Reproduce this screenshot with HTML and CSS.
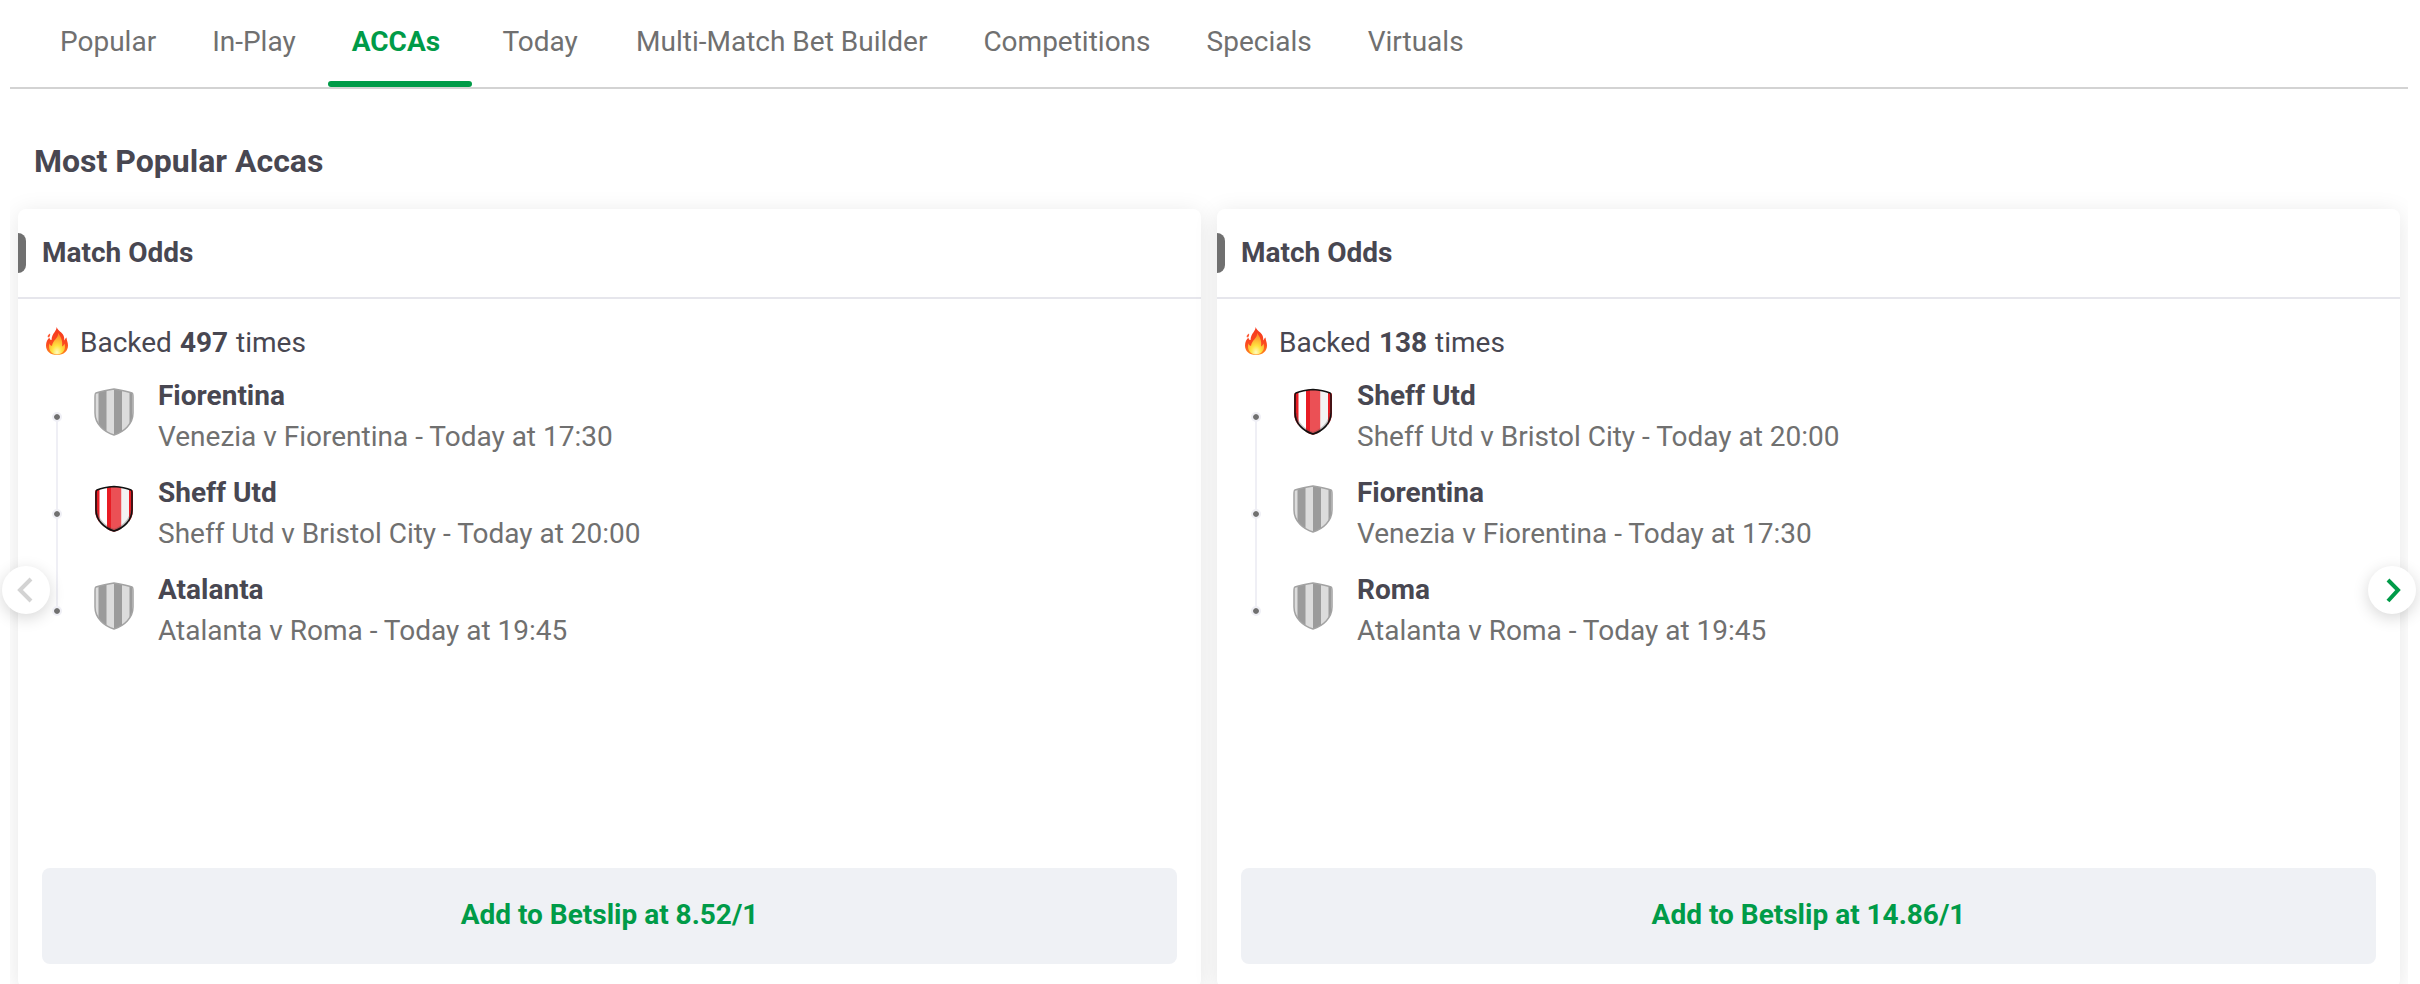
FILE: index.html
```html
<!DOCTYPE html>
<html lang="en">

<head>
    <meta charset="utf-8">
    <meta name="viewport" content="width=device-width, initial-scale=1.0">
    <title>Most Popular Accas</title>
    <link rel="stylesheet" href="styles.css">
</head>

<body>
    <!-- shared icons -->
    <svg class="sprite" aria-hidden="true">
        <defs>
            <linearGradient id="flame-outer" x1="0" y1="0" x2="0" y2="1">
                <stop offset="0" stop-color="#f5381e" />
                <stop offset=".6" stop-color="#fb4a20" />
                <stop offset="1" stop-color="#ff8a1c" />
            </linearGradient>
            <radialGradient id="flame-inner" cx=".5" cy=".9" r=".8">
                <stop offset="0" stop-color="#fffbc0" />
                <stop offset=".4" stop-color="#ffe23f" />
                <stop offset="1" stop-color="#ff8a2a" />
            </radialGradient>
            <clipPath id="shield-clip">
                <path d="M20 1C26 2 32 3 38 5C39 5 39 7 39 9V25C39 36 30 44 20 47C10 44 1 36 1 25V9C1 7 1 5 2 5C8 3 14 2 20 1Z" />
            </clipPath>
        </defs>
        <symbol id="flame" viewBox="0 0 22 28">
            <path fill="url(#flame-outer)" d="M10.500 0C11 4 6 6 5.500 13C4.500 13.500 3.500 12 3.500 10.500C1.500 12 0 15 0 18.500C0 24 4 28 11 28C18 28 22 24 22 18.500C22 15 20.500 13 20.500 10.500C19.500 11 19 12.500 18.500 13.500C18 12 18.500 10.500 17.500 8.500C16 5 12 4 10.500 0Z" />
            <path fill="#ff5a35" d="M4 6.500C4.500 8 4 10 2 10.500C1 9.500 2 7.500 4 6.500Z" />
            <path fill="url(#flame-inner)" d="M12 6C13 11 6.500 13 6 19C4.500 18.500 3.500 17.500 3.500 16C1.500 22 5 27.500 11 27.500C17 27.500 20.500 22 18.500 16.500C18 18 17 19 16 19.500C17 14 15 10 12 6Z" />
        </symbol>
        <symbol id="shield-grey" viewBox="0 0 40 48">
            <g clip-path="url(#shield-clip)">
                <path fill="#dcdcdc" d="M0 0H40V48H0Z" />
                <path fill="#9b9b9b" d="M4.500 0H12.500V48H4.500ZM20 0H28V48H20ZM35.500 0H38V48H35.500Z" />
            </g>
            <path fill="none" stroke="#a3a3a3" stroke-width="1.500" d="M20 1C26 2 32 3 38 5C39 5 39 7 39 9V25C39 36 30 44 20 47C10 44 1 36 1 25V9C1 7 1 5 2 5C8 3 14 2 20 1Z" />
        </symbol>
        <symbol id="shield-red" viewBox="0 0 40 48">
            <g clip-path="url(#shield-clip)">
                <path fill="#fff" d="M0 0H40V48H0Z" />
                <path fill="#e81c24" d="M1 0H5.500V48H1ZM13 0H17V48H13ZM35 0H39V48H35Z" />
                <path fill="#eb5055" d="M17 0H27.500V48H17Z" />
                <path fill="#f3f3f3" d="M27.500 0H35V48H27.500Z" />
            </g>
            <path fill="none" stroke="#444" stroke-opacity=".3" stroke-width="4" clip-path="url(#shield-clip)" d="M2 25C2 36 11 43 20 46C29 43 38 36 38 25" />
            <path fill="none" stroke="#111" stroke-width="1.500" d="M20 1.500C26 2 32 3 37 5C38 5 38 7 38 9V25C38 35 30 43 20 46C10 43 2 35 2 25V9C2 7 2 5 3 5C8 3 14 2 20 1.500Z" />
        </symbol>
    </svg>

    <nav class="tabs">
        <a href="#">Popular</a>
        <a href="#">In-Play</a>
        <a href="#" class="active">ACCAs</a>
        <a href="#">Today</a>
        <a href="#">Multi-Match Bet Builder</a>
        <a href="#">Competitions</a>
        <a href="#">Specials</a>
        <a href="#">Virtuals</a>
    </nav>

    <h1>Most Popular Accas</h1>

    <div class="carousel">
        <div class="cards">
            <section class="card">
                <h2>Match Odds</h2>
                <div class="card-body">
                    <p class="backed"><svg class="flame"><use href="#flame" /></svg>Backed <b>497</b> times</p>
                    <ul class="legs">
                        <li>
                            <svg class="shield"><use href="#shield-grey" /></svg>
                            <div>
                                <strong>Fiorentina</strong>
                                <span>Venezia v Fiorentina - Today at 17:30</span>
                            </div>
                        </li>
                        <li>
                            <svg class="shield"><use href="#shield-red" /></svg>
                            <div>
                                <strong>Sheff Utd</strong>
                                <span>Sheff Utd v Bristol City - Today at 20:00</span>
                            </div>
                        </li>
                        <li>
                            <svg class="shield"><use href="#shield-grey" /></svg>
                            <div>
                                <strong>Atalanta</strong>
                                <span>Atalanta v Roma - Today at 19:45</span>
                            </div>
                        </li>
                    </ul>
                    <button class="add">Add to Betslip at 8.52/1</button>
                </div>
            </section>
            <section class="card">
                <h2>Match Odds</h2>
                <div class="card-body">
                    <p class="backed"><svg class="flame"><use href="#flame" /></svg>Backed <b>138</b> times</p>
                    <ul class="legs">
                        <li>
                            <svg class="shield"><use href="#shield-red" /></svg>
                            <div>
                                <strong>Sheff Utd</strong>
                                <span>Sheff Utd v Bristol City - Today at 20:00</span>
                            </div>
                        </li>
                        <li>
                            <svg class="shield"><use href="#shield-grey" /></svg>
                            <div>
                                <strong>Fiorentina</strong>
                                <span>Venezia v Fiorentina - Today at 17:30</span>
                            </div>
                        </li>
                        <li>
                            <svg class="shield"><use href="#shield-grey" /></svg>
                            <div>
                                <strong>Roma</strong>
                                <span>Atalanta v Roma - Today at 19:45</span>
                            </div>
                        </li>
                    </ul>
                    <button class="add">Add to Betslip at 14.86/1</button>
                </div>
            </section>
        </div>
        <button class="arrow prev" aria-label="Previous" disabled>
            <svg viewBox="0 0 48 48"><path d="M29 13L18 24L29 35" /></svg>
        </button>
        <button class="arrow next" aria-label="Next">
            <svg viewBox="0 0 48 48"><path d="M20 14L30 24L20 35" /></svg>
        </button>
    </div>
</body>

</html>
```
FILE: styles.css
```css
* {
    margin: 0;
    padding: 0;
    box-sizing: border-box;
    font-family: Roboto, sans-serif;
}

body {
    height: 100vh;
    overflow: hidden;
    background: #fff;
    color: #484751;
    font-size: 28px;
    line-height: 40px;
}

.sprite {
    position: absolute;
    width: 0;
    height: 0;
}

.tabs {
    display: flex;
    gap: 8px;
    margin: 0 12px 0 10px;
    padding-left: 26px;
    border-bottom: 2px solid #d3d3d3;
}

.tabs a {
    position: relative;
    min-width: 128px;
    height: 87px;
    padding: 22px 24px 0;
    color: #707070;
    text-align: center;
    text-decoration: none;
}

.tabs .active {
    margin-right: -4px;
    padding-right: 32px;
    color: #009b48;
    font-weight: 700;
}

.tabs .active::after {
    content: "";
    position: absolute;
    left: 0;
    right: 0;
    bottom: 0;
    height: 6px;
    border-radius: 3px;
    background: #009b48;
}

h1 {
    padding: 52px 34px 11px;
    font-size: 32px;
    line-height: 40px;
    font-weight: 700;
}

.carousel {
    position: relative;
}

.cards {
    display: flex;
    gap: 16px;
    margin: 0 12px 0 10px;
    padding: 17px 8px 0;
    overflow: hidden;
}

.card {
    flex: 1;
    background: #fff;
    border-radius: 8px;
    box-shadow: 0 4px 24px rgba(0, 0, 0, .1);
}

.card h2 {
    display: flex;
    align-items: center;
    gap: 16px;
    height: 90px;
    border-bottom: 2px solid #e6e6ec;
    font-size: 28px;
    font-weight: 700;
}

.card h2::before {
    content: "";
    width: 8px;
    height: 40px;
    border-radius: 0 8px 8px 0;
    background: #707070;
}

.card-body {
    padding: 24px;
}

.backed {
    display: flex;
    align-items: center;
    gap: 8px;
    margin-bottom: 12px;
}

.flame {
    width: 22px;
    height: 28px;
    margin: 0 4px 4px;
}

.legs {
    min-height: 493px;
    list-style: none;
}

.legs li {
    position: relative;
    display: flex;
    gap: 24px;
    height: 97px;
    padding: 1px 0 0 52px;
}

/* timeline dot and the line down to the next one */
.legs li::before {
    content: "";
    position: absolute;
    z-index: 1;
    left: 10px;
    top: 37px;
    width: 6px;
    height: 6px;
    border: 2px solid #efeff5;
    border-radius: 50%;
    background: #707070;
    background-clip: padding-box;
}

.legs li:not(:last-child)::after {
    content: "";
    position: absolute;
    left: 14px;
    top: 42px;
    width: 2px;
    height: 97px;
    background: #efeff5;
}

.shield {
    width: 40px;
    height: 48px;
    margin-top: 12px;
}

.legs strong,
.legs span {
    display: block;
}

.legs strong {
    font-weight: 700;
}

.legs span {
    color: #707070;
    line-height: 42px;
}

.add {
    width: 100%;
    height: 96px;
    padding-bottom: 4px;
    border: none;
    border-radius: 8px;
    background: #eff1f5;
    color: #009b48;
    font-size: 28px;
    font-weight: 700;
    cursor: pointer;
}

.arrow {
    position: absolute;
    top: 50%;
    width: 48px;
    height: 48px;
    margin-top: -24px;
    border: none;
    border-radius: 50%;
    background: #fff;
    box-shadow: 0 4px 16px rgba(0, 0, 0, .16);
    cursor: pointer;
}

.prev {
    left: 2px;
}

.next {
    right: 4px;
}

.arrow svg {
    display: block;
    fill: none;
    stroke: #009b48;
    stroke-width: 4;
}

.arrow:disabled svg {
    stroke: #d3d3d3;
}
```
